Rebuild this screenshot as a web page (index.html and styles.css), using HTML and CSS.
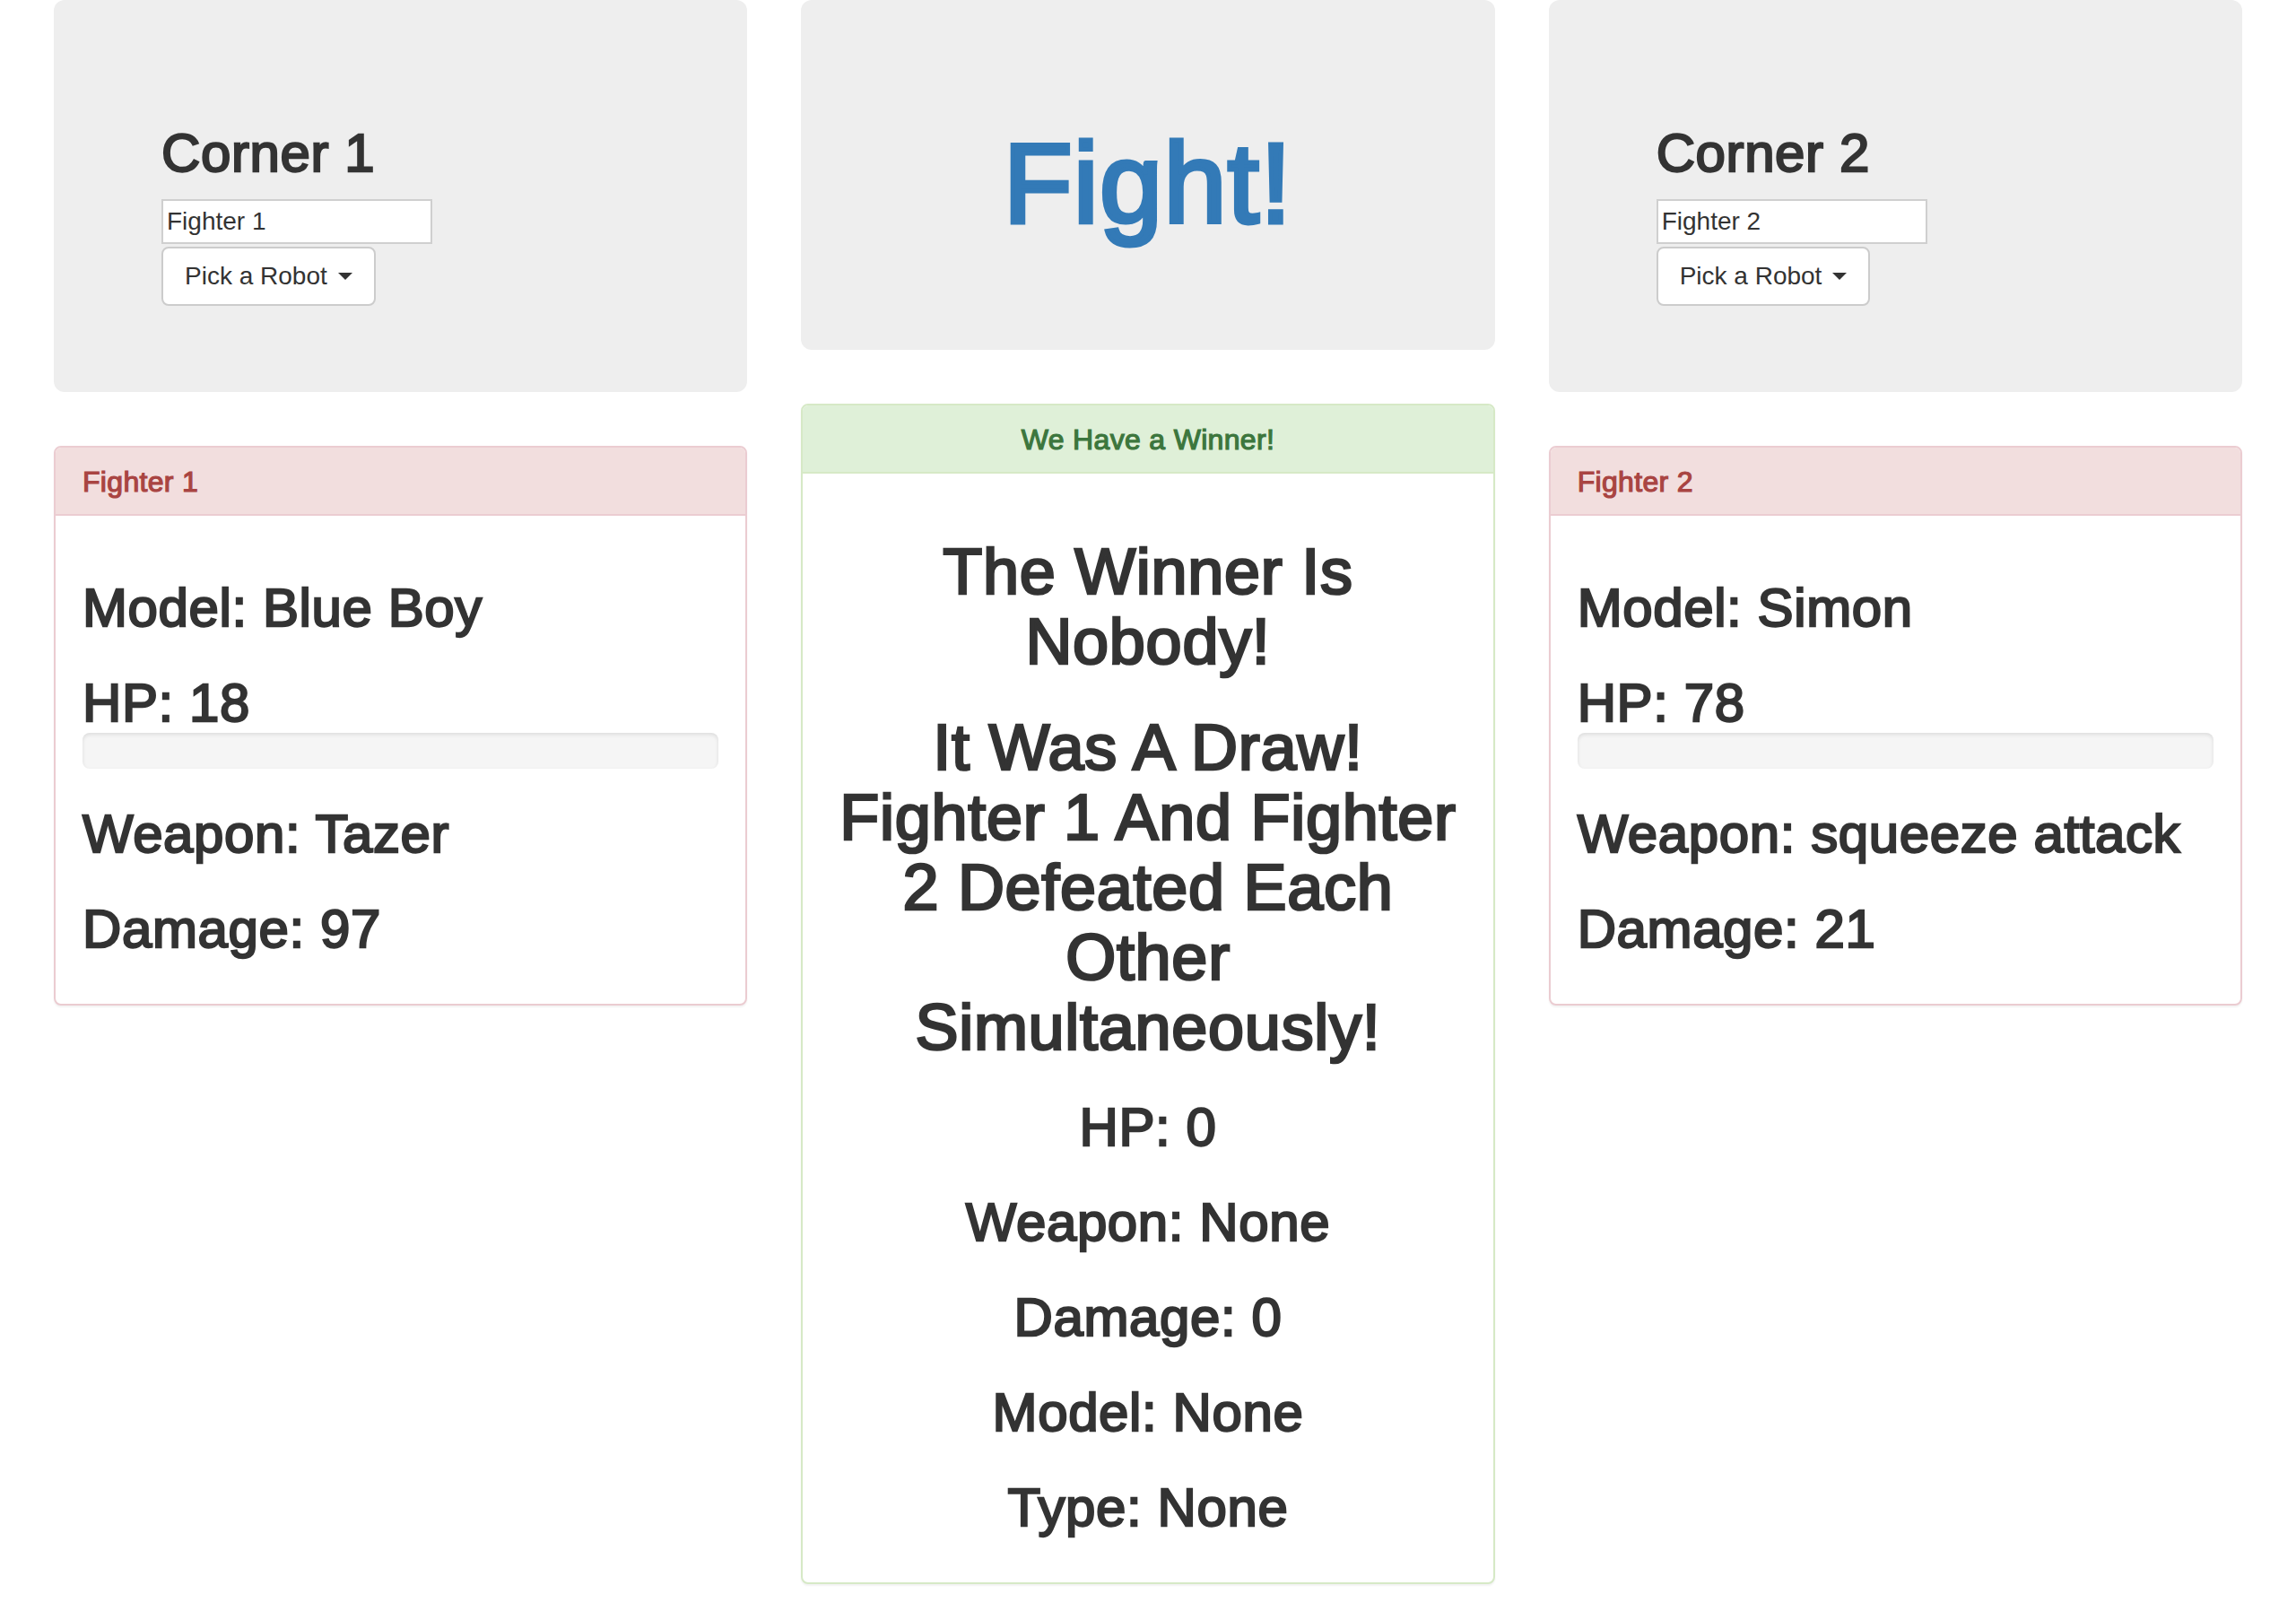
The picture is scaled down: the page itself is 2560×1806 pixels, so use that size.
FILE: index.html
```html
<!DOCTYPE html>
<html lang="en">
<head>
<meta charset="utf-8">
<title>Robot Fight</title>
<link rel="stylesheet" href="styles.css">
</head>
<body>
<div class="arena">
  <div class="column">
    <div class="jumbotron">
      <h2 class="corner-title">Corner 1</h2>
      <input class="name-input" type="text" value="Fighter 1">
      <div class="dropdown">
        <button class="btn-pick" type="button">Pick a Robot <span class="caret"></span></button>
      </div>
    </div>
    <div class="panel panel-danger">
      <div class="panel-heading"><h3 class="panel-title">Fighter 1</h3></div>
      <div class="panel-body">
        <h2 class="stat">Model: Blue Boy</h2>
        <h2 class="stat stat-flush">HP: 18</h2>
        <div class="progress"><div class="progress-bar"></div></div>
        <h2 class="stat">Weapon: Tazer</h2>
        <h2 class="stat">Damage: 97</h2>
      </div>
    </div>
  </div>

  <div class="column">
    <div class="jumbotron">
      <h1 class="fight-title">Fight!</h1>
    </div>
    <div class="panel panel-success">
      <div class="panel-heading centered"><h3 class="panel-title">We Have a Winner!</h3></div>
      <div class="panel-body centered">
        <h1 class="verdict">The Winner Is Nobody!</h1>
        <h1 class="verdict">It Was A Draw! Fighter 1 And Fighter 2 Defeated Each Other<br>Simultaneously!</h1>
        <h2 class="stat">HP: 0</h2>
        <h2 class="stat">Weapon: None</h2>
        <h2 class="stat">Damage: 0</h2>
        <h2 class="stat">Model: None</h2>
        <h2 class="stat">Type: None</h2>
      </div>
    </div>
  </div>

  <div class="column">
    <div class="jumbotron">
      <h2 class="corner-title">Corner 2</h2>
      <input class="name-input" type="text" value="Fighter 2">
      <div class="dropdown">
        <button class="btn-pick" type="button">Pick a Robot <span class="caret"></span></button>
      </div>
    </div>
    <div class="panel panel-danger">
      <div class="panel-heading"><h3 class="panel-title">Fighter 2</h3></div>
      <div class="panel-body">
        <h2 class="stat">Model: Simon</h2>
        <h2 class="stat stat-flush">HP: 78</h2>
        <div class="progress"><div class="progress-bar"></div></div>
        <h2 class="stat">Weapon: squeeze attack</h2>
        <h2 class="stat">Damage: 21</h2>
      </div>
    </div>
  </div>
</div>
</body>
</html>
```

FILE: styles.css
```css
* {
  box-sizing: border-box;
}

html,
body {
  margin: 0;
  padding: 0;
}

body {
  font-family: "Liberation Sans", Arial, Helvetica, sans-serif;
  font-size: 28px;
  line-height: 40px;
  color: #333333;
  background: #ffffff;
}

.arena {
  display: grid;
  grid-template-columns: repeat(3, minmax(0, 1fr));
  column-gap: 60px;
  padding: 0 60px;
  align-items: start;
}

.column {
  display: flex;
  flex-direction: column;
  min-width: 0;
}

/* headings share a medium-like weight */
.corner-title,
.fight-title,
.panel-title,
.stat,
.verdict {
  font-weight: 500;
  -webkit-text-stroke: 0.038em currentColor;
  letter-spacing: 0.01em;
}

/* jumbotron */
.jumbotron {
  background: #eeeeee;
  border-radius: 12px;
  padding: 96px 120px;
  margin-bottom: 60px;
}

.corner-title {
  font-size: 60px;
  line-height: 66px;
  margin: 40px 0 20px;
  padding-top: 2px;
  height: 66px;
}

.fight-title {
  font-size: 126px;
  line-height: 138px;
  margin: 40px 0 20px;
  color: #337ab7;
  text-align: center;
}

.name-input {
  display: block;
  width: 302px;
  height: 50px;
  margin: 0 0 3px;
  padding: 0 4px;
  border: 2px solid #cfcfcf;
  border-radius: 0;
  background: #ffffff;
  font-family: inherit;
  font-size: 28px;
  line-height: 40px;
  color: #333333;
}

.dropdown {
  display: flex;
}

.btn-pick {
  display: inline-flex;
  align-items: center;
  padding: 11px 24px;
  font-family: inherit;
  font-size: 28px;
  line-height: 40px;
  color: #333333;
  background: #ffffff;
  border: 2px solid #cccccc;
  border-radius: 8px;
  white-space: pre;
}

.caret {
  display: inline-block;
  width: 0;
  height: 0;
  margin-left: 4px;
  border-top: 8px solid #333333;
  border-right: 8px solid transparent;
  border-left: 8px solid transparent;
}

/* panels */
.panel {
  background: #ffffff;
  border: 2px solid transparent;
  border-radius: 8px;
  box-shadow: 0 2px 2px rgba(0, 0, 0, 0.05);
  margin-bottom: 40px;
}

.panel-heading {
  padding: 21px 30px 19px;
  border-bottom: 2px solid transparent;
  border-radius: 6px 6px 0 0;
}

.panel-title {
  font-size: 32px;
  line-height: 34px;
  margin: 0;
}

.panel-body {
  padding: 30px;
}

.panel-danger {
  border-color: #ebccd1;
}

.panel-danger .panel-heading {
  color: #a94442;
  background: #f2dede;
  border-bottom-color: #ebccd1;
}

.panel-success {
  border-color: #d6e9c6;
}

.panel-success .panel-heading {
  color: #3c763d;
  background: #dff0d8;
  border-bottom-color: #d6e9c6;
}

.centered {
  text-align: center;
}

.stat {
  font-size: 60px;
  line-height: 66px;
  margin: 40px 0 20px;
}

.stat-flush {
  margin-bottom: 0;
}

.verdict {
  font-size: 72px;
  line-height: 78px;
  margin: 40px 0 20px;
}

.progress {
  height: 40px;
  margin-bottom: 40px;
  background: #f5f5f5;
  border-radius: 8px;
  box-shadow: inset 0 2px 4px rgba(0, 0, 0, 0.1);
  overflow: hidden;
}

.progress-bar {
  width: 0;
  height: 100%;
  background: #337ab7;
}
```
